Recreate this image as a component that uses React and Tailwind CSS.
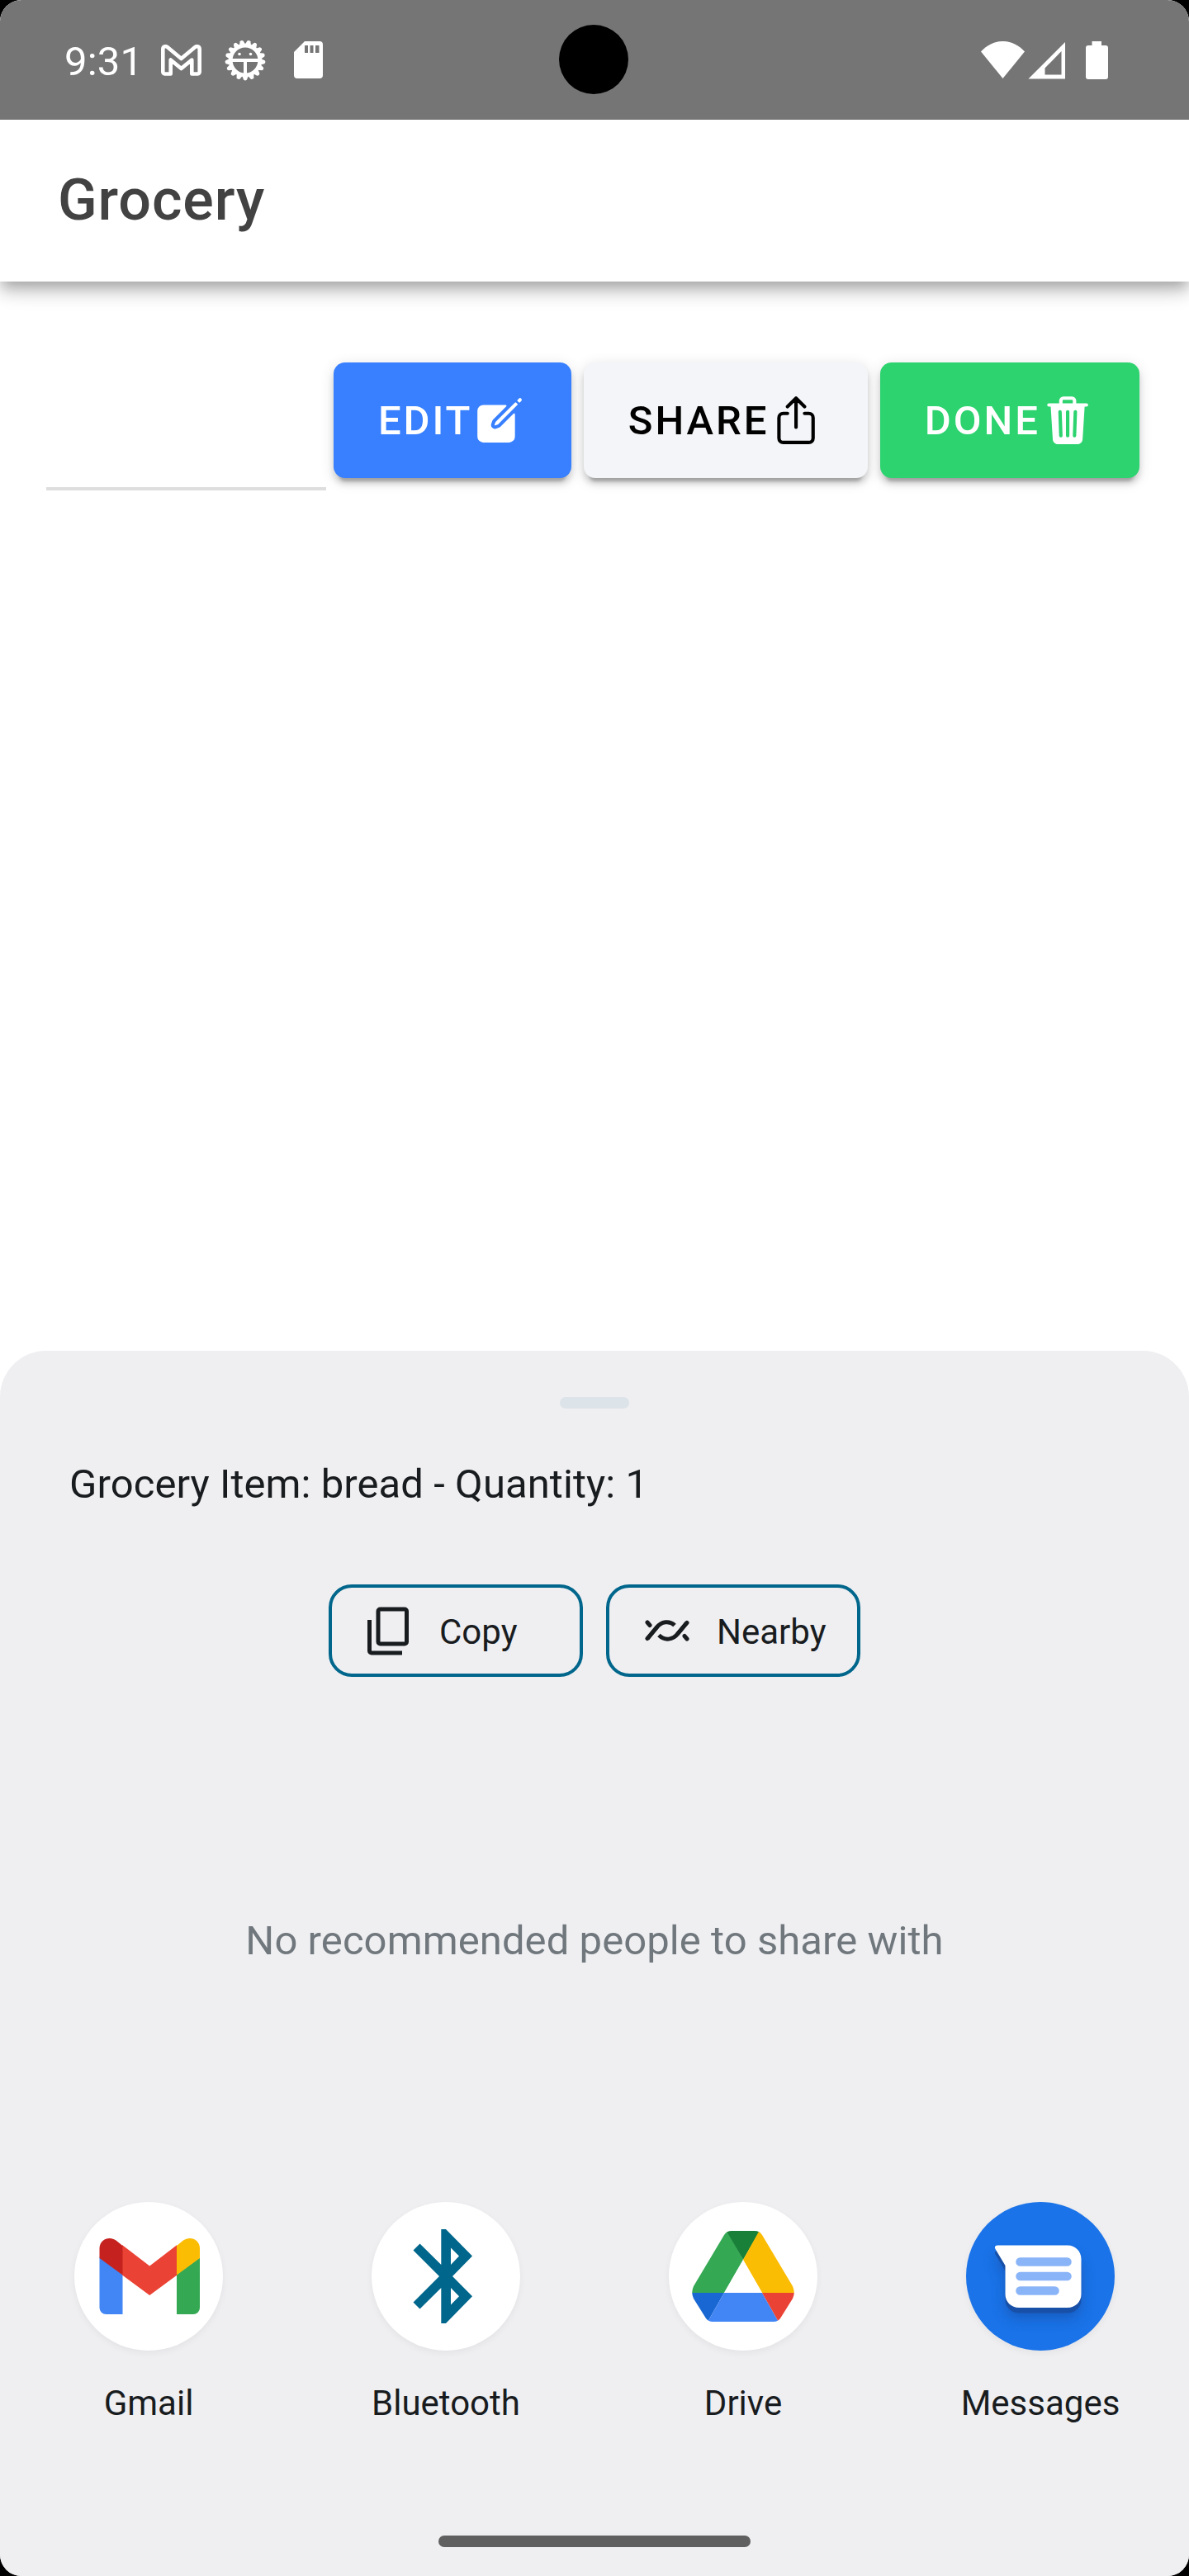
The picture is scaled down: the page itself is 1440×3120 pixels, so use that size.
import { IoCreate, IoShareOutline, IoTrash } from "react-icons/io5";

function GmailOutline() {
  return (
    <svg className="h-[38px] w-[49px]" viewBox="0 0 49 38" fill="none" stroke="#fff" strokeWidth="4.6" strokeLinejoin="round">
      <path d="M2.3 33V5.5C2.3 2.4 5.6 1.4 7.7 3L24.5 17 41.3 3c2.1-1.6 5.4-.6 5.4 2.5V33c0 1.500-1 2.500-2.200 2.500H37.300V18.500L24.500 29 11.700 18.500V35.500H4.500C3.300 35.500 2.300 34.500 2.300 33Z" />
    </svg>
  );
}

function BugGear() {
  const teeth = Array.from({ length: 17 }, (_, i) => 90 + (i * 360) / 17);
  return (
    <svg className="h-[50px] w-[50px]" viewBox="-25 -25 50 50">
      <g fill="#fff">
        {teeth.map((a) => (
          <path key={a} transform={`rotate(${a})`} d="M17-4.400L23.600-2Q25.400 0 23.600 2L17 4.400Z" />
        ))}
      </g>
      <circle r="17.800" fill="none" stroke="#fff" strokeWidth="4.800" />
      <path d="M-16 0H16M0 0V17" stroke="#fff" strokeWidth="4" />
      <circle cx="-7" cy="-7.500" r="1.800" fill="#fff" />
      <circle cx="6.500" cy="-7.500" r="1.800" fill="#fff" />
    </svg>
  );
}

function SdCard() {
  return (
    <svg className="h-[45px] w-[35px]" viewBox="0 0 35 45">
      <path fill="#fff" fillRule="evenodd" d="M13 0H31a4 4 0 0 1 4 4V41a4 4 0 0 1-4 4H4a4 4 0 0 1-4-4V13ZM13 5V14H17V5ZM19.500 5V14H23.500V5ZM26 5V14H30.500V5Z" />
    </svg>
  );
}

function StatusBar() {
  return (
    <div className="relative flex h-[145px] items-center rounded-t-[26px] bg-[#757575] pr-[98px] pl-[78px]">
      <span className="w-[117px] pt-[3px] text-[49px] leading-[57px] tracking-[0.2px]">9:31</span>
      <GmailOutline />
      <div className="ml-[28px]"><BugGear /></div>
      <div className="ml-[34px] flex"><SdCard /></div>
      <div className="absolute top-[30px] left-[677px] h-[84px] w-[84px] rounded-full bg-black" />
      <svg className="ml-auto h-[46px] w-[154px]" viewBox="0 0 154 46" fill="#fff">
        <path d="M0 12.500C15-4.200 38-4.200 53 12.500L26.500 45Z" />
        <path fillRule="evenodd" d="M102 1V45.500H57.500ZM97.500 12 77.500 32.500V40.500H97.500Z" />
        <path d="M134.500 0H146V5H151a3 3 0 0 1 3 3V43a3 3 0 0 1-3 3H130a3 3 0 0 1-3-3V8a3 3 0 0 1 3-3H134.500Z" />
      </svg>
    </div>
  );
}

function ActionButton({ label, Icon, className }) {
  return (
    <button className={`flex h-[140px] items-center rounded-[14px] px-[53.9px] text-[49px] font-medium tracking-[2.94px] shadow-[0_10.5px_3.5px_-7px_rgba(0,0,0,0.2),0_7px_7px_0_rgba(0,0,0,0.14),0_3.5px_17.5px_0_rgba(0,0,0,0.12)] ${className}`}>
      <span className="pt-px">{label}</span>
      <Icon className="h-[66.15px] w-[66.15px] shrink-0" />
    </button>
  );
}

function CopyIcon() {
  return (
    <svg className="h-[59px] w-[50px]" viewBox="0 0 50 59" fill="none" stroke="#191c1e" strokeWidth="5">
      <rect x="13" y="3" width="34.500" height="42" rx="2.500" />
      <path d="M2.500 16V53.500a2.500 2.500 0 0 0 2.500 2.500H42" />
    </svg>
  );
}

function NearbyIcon() {
  return (
    <svg className="h-[26px] w-[54px]" viewBox="0 0 54 26" fill="none" stroke="#191c1e" strokeWidth="5" strokeLinecap="round">
      <path d="M3 23 14 9.500C20 1.500 30 .5 36 6.500" strokeLinecap="butt" />
      <path d="M3 22.500 14 9.500" />
      <path d="M51 3 40 16.500C34 24.500 24 25.500 17 18.500" strokeLinecap="butt" />
      <path d="M51 3.500 40 16.500" />
      <path d="M3 3 6 6.500M48 19.500 51 23" />
    </svg>
  );
}

function Chip({ children, label }) {
  return (
    <button className="flex h-[112px] w-[308px] items-center rounded-[28px] border-4 border-[#00668b] text-[42px] text-[#191c1e]">
      <span className="flex w-[130px] justify-start pl-[43px]">{children}</span>
      <span className="pt-[2px]">{label}</span>
    </button>
  );
}

function GmailLogo() {
  return (
    <svg className="h-[180px] w-[180px]" viewBox="0 0 180 180">
      <path fill="#4285f4" d="M30.500 67 58.500 88V136H38.500a8 8 0 0 1-8-8Z" />
      <path fill="#34a853" d="M124 88 152 67V128a8 8 0 0 1-8 8H124Z" />
      <path fill="#ea4335" d="M58 52 91.200 77.500 124.400 52V88.500L91.200 113 58 88.500Z" />
      <path fill="#c5221f" d="M58.500 53V88.500L30.500 68V56c0-10.500 12-15.500 20-9.500Z" />
      <path fill="#fbbc04" d="M124 53V88.500L152 68V56c0-10.500-12-15.500-20-9.500Z" />
    </svg>
  );
}

function BluetoothLogo() {
  return (
    <svg className="h-[180px] w-[180px]" viewBox="0 0 180 180">
      <path fill="#00668b" fillRule="evenodd" d="M84.300 33H90L122 65.500 98 90 122 114.300 90 147H84.300V104L58.500 129.500 50.500 121.500 82 90 50.500 58.500 58.500 50.500 84.300 76ZM96 55.500V76L106 65.500ZM96 104V124.500L106 114.300Z" />
    </svg>
  );
}

function DriveLogo() {
  return (
    <svg className="h-[180px] w-[180px]" viewBox="0 0 180 180">
      <clipPath id="driveShape">
        <path d="M76 35H104Q110 35 113 40L150 102Q153.500 110 150 117L135 141Q132 145 127 145H53Q48 145 45 141L30 117Q26.500 110 30 102L67 40Q70 35 76 35Z" />
      </clipPath>
      <g clipPath="url(#driveShape)">
        <path fill="#34a853" d="M20 110H67L90 70 70 34Z" />
        <path fill="#188038" d="M68 32H112L90 70Z" />
        <path fill="#fbbc04" d="M110 34 90 70 113 110H160Z" />
        <path fill="#1967d2" d="M20 110H67L46 147Z" />
        <path fill="#4285f4" d="M67 110H113L134 147H46Z" />
        <path fill="#ea4335" d="M113 110H160L134 147Z" />
      </g>
      <path fill="#fff" d="M90 70 113 110H67Z" />
    </svg>
  );
}

function MessagesLogo() {
  const bubble = "M38 52.500H123C132 52.500 139.500 59.500 139.500 69V112C139.500 121 132 128 123 128H64C55 128 47.500 121 47.500 112V77L35.500 57C34 54.500 35.500 52.500 38 52.500Z";
  return (
    <svg className="h-[180px] w-[180px]" viewBox="0 0 180 180">
      <defs>
        <filter id="bubbleShadow" x="-30%" y="-30%" width="160%" height="180%">
          <feGaussianBlur stdDeviation="8" />
        </filter>
      </defs>
      <path d={bubble} transform="translate(0 13)" fill="#174ea6" opacity=".6" filter="url(#bubbleShadow)" />
      <path d={bubble} transform="translate(0 6.500)" fill="#1850a8" />
      <path d={bubble} fill="#fff" />
      <path d="M65.500 72.500H122.500M65.500 90H122.500M65.500 107.500H107.500" stroke="#8ab4f8" strokeWidth="10.500" strokeLinecap="round" />
    </svg>
  );
}

function Target({ label, bg, children }) {
  return (
    <div className="flex w-[360px] flex-col items-center">
      <div className={`h-[180px] w-[180px] overflow-hidden rounded-full shadow-[0_3px_8px_rgba(0,0,0,0.05)] ${bg}`}>{children}</div>
      <span className="mt-[39px] text-[42px] leading-[50px] text-[#191c1e]">{label}</span>
    </div>
  );
}

export default function App() {
  return (
    <div className="h-[3120px] w-[1440px] overflow-hidden bg-black font-['Roboto',sans-serif] text-white">
      <div className="flex h-full flex-col overflow-hidden rounded-[26px] bg-white">
        <StatusBar />
        <header className="flex h-[196px] items-center bg-white pb-[2px] pl-[70px] text-[70px] font-medium tracking-[0.875px] text-[#424242] shadow-[0_7px_14px_-3.5px_rgba(0,0,0,0.2),0_14px_17.5px_0_rgba(0,0,0,0.14),0_3.5px_35px_0_rgba(0,0,0,0.12)]">
          <h1>Grocery</h1>
        </header>
        <main className="flex flex-1 items-start pt-[98px] pl-[56px]">
          <div className="mr-[9px] h-[155px] w-[339px] border-b-4 border-[#dedede]" />
          <div className="flex gap-[14.5px]">
            <ActionButton label="EDIT" Icon={IoCreate} className="bg-[#3880ff] text-white" />
            <ActionButton label="SHARE" Icon={IoShareOutline} className="bg-[#f4f5f8] text-black" />
            <ActionButton label="DONE" Icon={IoTrash} className="bg-[#2dd36f] text-white" />
          </div>
        </main>
        <section className="flex h-[1484px] flex-col items-center rounded-t-[56px] bg-[#efeff2]">
          <div className="mt-[56px] h-[14px] w-[84px] shrink-0 rounded-full bg-[#dce3e9]" />
          <p className="mt-[63px] w-full pl-[84px] text-[49px] leading-[58px] tracking-[0.07px] text-[#191c1e]">Grocery Item: bread - Quantity: 1</p>
          <div className="mt-[92px] flex gap-[28px]">
            <Chip label="Copy"><CopyIcon /></Chip>
            <Chip label="Nearby"><NearbyIcon /></Chip>
          </div>
          <p className="mt-[291px] text-[49px] leading-[58px] tracking-[0.07px] text-[#70787d]">No recommended people to share with</p>
          <div className="mt-[287px] flex">
            <Target label="Gmail" bg="bg-white"><GmailLogo /></Target>
            <Target label="Bluetooth" bg="bg-white"><BluetoothLogo /></Target>
            <Target label="Drive" bg="bg-white"><DriveLogo /></Target>
            <Target label="Messages" bg="bg-[#1a73e8]"><MessagesLogo /></Target>
          </div>
          <div className="mt-auto mb-[35px] h-[14px] w-[378px] rounded-full bg-[#606060]" />
        </section>
      </div>
    </div>
  );
}
